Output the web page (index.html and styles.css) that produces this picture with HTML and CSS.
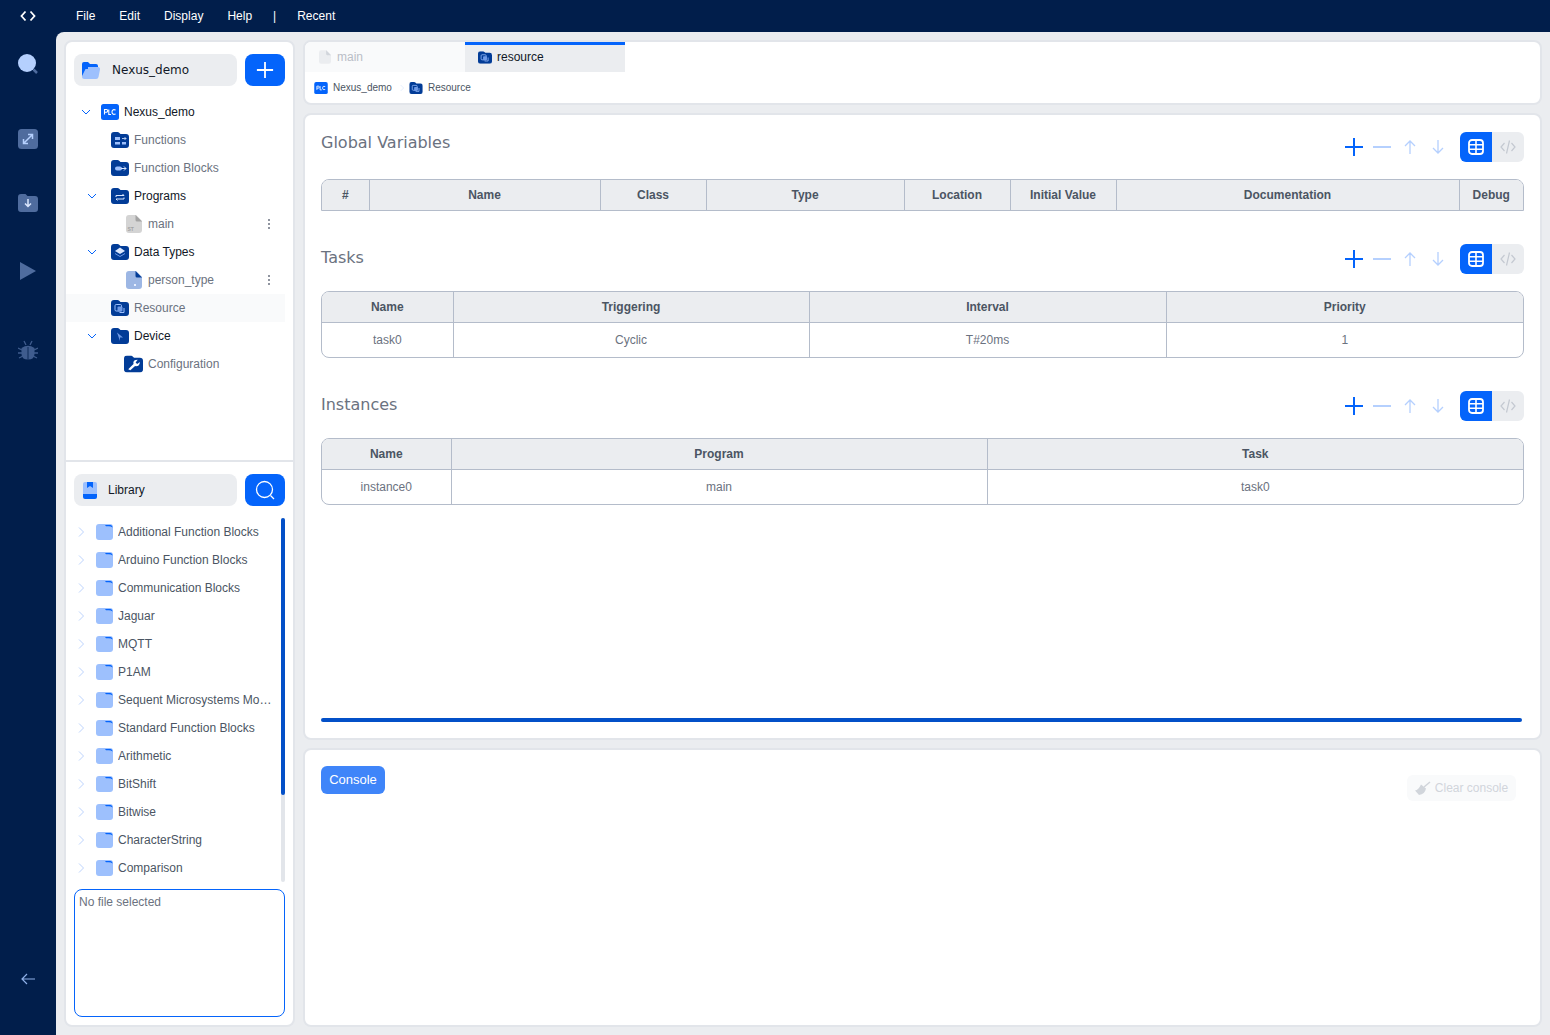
FILE: index.html
```html
<!DOCTYPE html>
<html lang="en">
<head>
    <meta charset="UTF-8">
    <meta name="viewport" content="width=device-width, initial-scale=1.0">
    <title>Nexus_demo - resource</title>
    <link rel="stylesheet" href="styles.css">
</head>
<body>
    <!-- Shared icons -->
    <svg class="sprite" width="0" height="0">
        <symbol id="i-folder" viewBox="0 0 18 16">
            <path d="M3 0H6.500Q7.500 0 8.200 .8L9.500 2H15A3 3 0 0 1 18 5V13A3 3 0 0 1 15 16H3A3 3 0 0 1 0 13V3A3 3 0 0 1 3 0z" fill="#023c97"/>
        </symbol>
        <symbol id="i-plc" viewBox="0 0 18 16">
            <rect width="18" height="16" rx="2.500" fill="#0464fb"/>
            <path d="M3.500 10.500V5.500H5.500Q6.700 5.500 6.700 6.800T5.500 8.200H3.500M7.800 5.500V10.500H10M14.600 6Q11 4.800 11 8T14.600 10" fill="none" stroke="#fff" stroke-width="1.100"/>
        </symbol>
        <symbol id="i-libfolder" viewBox="0 0 17 16">
            <rect width="17" height="16" y="0" rx="3" fill="#9dc0fd"/>
            <path d="M9 1H14.500Q16.500 1 16.500 3.500Q15 2 12 2.200H10z" fill="#0464fb"/>
        </symbol>
        <symbol id="i-chevron" viewBox="0 0 12 12">
            <path d="M2 4l4 4 4-4" fill="none" stroke="currentColor" stroke-width="1"/>
        </symbol>
        <symbol id="i-chevron-right" viewBox="0 0 12 12">
            <path d="M4 1.500l4.500 4.500L4 10.500" fill="none" stroke="currentColor" stroke-width="1"/>
        </symbol>
        <symbol id="i-plus" viewBox="0 0 20 20">
            <path d="M10 1V19M1 10H19" fill="none" stroke="currentColor" stroke-width="2"/>
        </symbol>
        <symbol id="i-minus" viewBox="0 0 20 20">
            <path d="M1 10H19" fill="none" stroke="currentColor" stroke-width="2"/>
        </symbol>
        <symbol id="i-up" viewBox="0 0 14 16">
            <path d="M7 15V2M2 7l5-5 5 5" fill="none" stroke="currentColor" stroke-width="1.300"/>
        </symbol>
        <symbol id="i-down" viewBox="0 0 14 16">
            <path d="M7 1V14M2 9l5 5 5-5" fill="none" stroke="currentColor" stroke-width="1.300"/>
        </symbol>
        <symbol id="i-grid" viewBox="0 0 16 16">
            <rect x="1" y="1" width="14" height="14" rx="3" fill="none" stroke="currentColor" stroke-width="1.800"/>
            <path d="M1 5.700H15M1 10.300H15M8 1V15" stroke="currentColor" stroke-width="1.600"/>
        </symbol>
        <symbol id="i-code" viewBox="0 0 16 16">
            <path d="M4.500 4L1 8l3.500 4M11.500 4L15 8l-3.500 4M9.500 1.500L6.500 14.500" fill="none" stroke="currentColor" stroke-width="1.200"/>
        </symbol>
        <symbol id="i-file" viewBox="0 0 16 18">
            <path d="M3 0H10L16 6V15A3 3 0 0 1 13 18H3A3 3 0 0 1 0 15V3A3 3 0 0 1 3 0z" fill="currentColor"/>
            <path d="M9.500 0L16 6.500H11A1.500 1.500 0 0 1 9.500 5z" fill="var(--fold)"/>
        </symbol>
        <symbol id="i-resource" viewBox="0 0 18 16">
            <use href="#i-folder"/>
            <rect x="4" y="4.500" width="6.500" height="6.500" rx="1.200" fill="none" stroke="#9dc0fd" stroke-width="1"/>
            <rect x="6.500" y="6.500" width="5" height="5" rx="1" fill="#6f9ae6"/>
            <path d="M13 8V12.500H8.500" fill="none" stroke="#9dc0fd" stroke-width="1"/>
        </symbol>
    </svg>

    <header class="topbar">
        <div class="logo">
            <svg width="16" height="12" viewBox="0 0 16 12"><path d="M5.500 1.500L1.500 6l4 4.500M10.500 1.500l4 4.500-4 4.500" fill="none" stroke="#fff" stroke-width="1.800"/></svg>
        </div>
        <nav class="menu">
            <span>File</span>
            <span>Edit</span>
            <span>Display</span>
            <span>Help</span>
            <span class="menu-sep">|</span>
            <span>Recent</span>
        </nav>
    </header>

    <div class="app">
        <!-- Activity bar -->
        <aside class="activity">
            <button class="activity-btn search">
                <svg width="22" height="22" viewBox="0 0 22 22"><circle cx="10" cy="10" r="9" fill="#b5d0fe"/><path d="M16.500 16.500L20 20" stroke="#4f6c9e" stroke-width="2.500"/></svg>
            </button>
            <button class="activity-btn zoom">
                <svg width="20" height="20" viewBox="0 0 20 20"><rect width="20" height="20" rx="3.500" fill="#4f6c9e"/><path d="M6 14L14 6M10 5.500H14.500V10M5.500 10V14.500H10" fill="none" stroke="#b5d0fe" stroke-width="1.500"/></svg>
            </button>
            <button class="activity-btn download">
                <svg width="20" height="18" viewBox="0 0 20 18"><path d="M3 0H7.500l2 2H17a3 3 0 0 1 3 3v10a3 3 0 0 1-3 3H3a3 3 0 0 1-3-3V3a3 3 0 0 1 3-3z" fill="#4f6c9e"/><path d="M10 5V12M7 9.500l3 3 3-3" fill="none" stroke="#dbe7fe" stroke-width="1.500"/></svg>
            </button>
            <button class="activity-btn run">
                <svg width="16" height="18" viewBox="0 0 16 18"><path d="M0 0L16 9 0 18z" fill="#4f6c9e"/></svg>
            </button>
            <button class="activity-btn debug">
                <svg width="20" height="20" viewBox="0 0 20 20"><path d="M3.500 8Q10 3.500 16.500 8V14Q16.500 19.500 10 19.500T3.500 14z" fill="#3f5c8e"/><path d="M0 8L4 10M20 8L16 10M0 13H4M20 13H16M1 18L5 16M19 18L15 16M6 1L8 5M14 1L12 5" stroke="#3f5c8e" stroke-width="1.300"/><path d="M10 7V19.500" stroke="#011e4b" stroke-width=".8"/></svg>
            </button>
            <button class="activity-btn collapse">
                <svg width="14" height="12" viewBox="0 0 14 12"><path d="M14 6H1M6 1L1 6l5 5" fill="none" stroke="#8fb0e8" stroke-width="1.200"/></svg>
            </button>
        </aside>

        <main class="workspace">
            <!-- Project and library -->
            <section class="panel side">
                <div class="project">
                    <div class="side-head">
                        <div class="side-title project-title">
                            <svg width="18" height="17" viewBox="0 0 18 17"><path d="M2 0H6l2 2h6a2 2 0 0 1 2 2v2H0V2a2 2 0 0 1 2-2z" fill="#0464fb"/><path d="M0 5H2H16a2 2 0 0 1 2 2.500L16.500 15a2.500 2.500 0 0 1-2.500 2H2.500A2.500 2.500 0 0 1 0 14.500z" fill="#9dc0fd"/><path d="M0 4H6V7H3.500L0 14z" fill="#0464fb"/></svg>
                            <span>Nexus_demo</span>
                        </div>
                        <button class="side-btn"><svg width="18" height="18"><use href="#i-plus"/></svg></button>
                    </div>
                    <ul class="tree">
                        <li class="row root">
                            <svg class="chev" width="12" height="12"><use href="#i-chevron"/></svg>
                            <svg class="ico" width="18" height="16"><use href="#i-plc"/></svg>
                            <span class="strong">Nexus_demo</span>
                        </li>
                        <li class="row group">
                            <svg class="ico" width="18" height="16" viewBox="0 0 18 16"><use href="#i-folder"/><path d="M4 5H9V8H4zM4 10H9V12.500H4zM11 10H15V12.500H11z" fill="#9dc0fd"/><path d="M11 6.500H15M13.500 5L15 6.500 13.500 8" fill="none" stroke="#dbe7fe" stroke-width=".8"/></svg>
                            <span>Functions</span>
                        </li>
                        <li class="row group">
                            <svg class="ico" width="18" height="16" viewBox="0 0 18 16"><use href="#i-folder"/><rect x="4" y="6.500" width="7" height="4" rx="2" fill="#9dc0fd"/><path d="M10 8.500H15M13 6.500l2 2-2 2" fill="none" stroke="#dbe7fe"/></svg>
                            <span>Function Blocks</span>
                        </li>
                        <li class="row sub">
                            <svg class="chev" width="12" height="12"><use href="#i-chevron"/></svg>
                            <svg class="ico" width="18" height="16" viewBox="0 0 18 16"><use href="#i-folder"/><path d="M5 9V7.500H13M11.500 6L13 7.500M13 9.500V11H5M6.500 12.500L5 11" fill="none" stroke="#dbe7fe"/></svg>
                            <span class="strong">Programs</span>
                        </li>
                        <li class="row leaf">
                            <svg class="ico-file st" width="16" height="18" viewBox="0 0 16 18"><use href="#i-file"/><text x="1.500" y="15.500" class="file-tag">ST</text></svg>
                            <span>main</span>
                            <span class="kebab"></span>
                        </li>
                        <li class="row sub">
                            <svg class="chev" width="12" height="12"><use href="#i-chevron"/></svg>
                            <svg class="ico" width="18" height="16" viewBox="0 0 18 16"><use href="#i-folder"/><path d="M9 3.500L14 7 9 10 4 7z" fill="#dbe7fe"/><path d="M4 9.500L9 12.500l5-3" fill="none" stroke="#6f9ae6"/></svg>
                            <span class="strong">Data Types</span>
                        </li>
                        <li class="row leaf">
                            <svg class="ico-file dt" width="16" height="18" viewBox="0 0 16 18"><use href="#i-file"/><rect x="8" y="13" width="2" height="2" fill="#e8effe"/></svg>
                            <span>person_type</span>
                            <span class="kebab"></span>
                        </li>
                        <li class="row group selected">
                            <svg class="ico" width="18" height="16"><use href="#i-resource"/></svg>
                            <span>Resource</span>
                        </li>
                        <li class="row sub">
                            <svg class="chev" width="12" height="12"><use href="#i-chevron"/></svg>
                            <svg class="ico" width="18" height="16" viewBox="0 0 18 16"><use href="#i-folder"/><path d="M6 4.500L12 9.500H9V13z" fill="#6f9ae6"/></svg>
                            <span class="strong">Device</span>
                        </li>
                        <li class="row config">
                            <svg class="ico" width="19" height="18" viewBox="0 0 18 16"><use href="#i-folder"/><path d="M4 13L9 8Q8 4 13 4L11 6.500 12.500 8 15 6Q15 10.500 10.500 10L6 14z" fill="#fff"/></svg>
                            <span>Configuration</span>
                        </li>
                    </ul>
                </div>

                <div class="library">
                    <div class="side-head">
                        <div class="side-title library-title">
                            <svg width="14" height="17" viewBox="0 0 14 17"><path d="M2 0H12a2 2 0 0 1 2 2V13H0V2a2 2 0 0 1 2-2z" fill="#9dc0fd"/><path d="M4 0H10V6L7 4 4 6z" fill="#0464fb"/><path d="M0 12H14V15a2 2 0 0 1-2 2H2a2 2 0 0 1-2-2z" fill="#0464fb"/></svg>
                            <span>Library</span>
                        </div>
                        <button class="side-btn"><svg width="20" height="20" viewBox="0 0 20 20"><circle cx="9.500" cy="9.500" r="8" fill="none" stroke="#fff" stroke-width="1.300"/><path d="M15.500 15.500L19 19" stroke="#fff" stroke-width="1.300"/></svg></button>
                    </div>
                    <div class="lib-body">
                        <ul class="lib-list">
                            <li class="lib-row"><svg class="lib-chev" width="12" height="12"><use href="#i-chevron-right"/></svg><svg class="lib-ico" width="17" height="16"><use href="#i-libfolder"/></svg><span>Additional Function Blocks</span></li>
                            <li class="lib-row"><svg class="lib-chev" width="12" height="12"><use href="#i-chevron-right"/></svg><svg class="lib-ico" width="17" height="16"><use href="#i-libfolder"/></svg><span>Arduino Function Blocks</span></li>
                            <li class="lib-row"><svg class="lib-chev" width="12" height="12"><use href="#i-chevron-right"/></svg><svg class="lib-ico" width="17" height="16"><use href="#i-libfolder"/></svg><span>Communication Blocks</span></li>
                            <li class="lib-row"><svg class="lib-chev" width="12" height="12"><use href="#i-chevron-right"/></svg><svg class="lib-ico" width="17" height="16"><use href="#i-libfolder"/></svg><span>Jaguar</span></li>
                            <li class="lib-row"><svg class="lib-chev" width="12" height="12"><use href="#i-chevron-right"/></svg><svg class="lib-ico" width="17" height="16"><use href="#i-libfolder"/></svg><span>MQTT</span></li>
                            <li class="lib-row"><svg class="lib-chev" width="12" height="12"><use href="#i-chevron-right"/></svg><svg class="lib-ico" width="17" height="16"><use href="#i-libfolder"/></svg><span>P1AM</span></li>
                            <li class="lib-row"><svg class="lib-chev" width="12" height="12"><use href="#i-chevron-right"/></svg><svg class="lib-ico" width="17" height="16"><use href="#i-libfolder"/></svg><span>Sequent Microsystems Modules</span></li>
                            <li class="lib-row"><svg class="lib-chev" width="12" height="12"><use href="#i-chevron-right"/></svg><svg class="lib-ico" width="17" height="16"><use href="#i-libfolder"/></svg><span>Standard Function Blocks</span></li>
                            <li class="lib-row"><svg class="lib-chev" width="12" height="12"><use href="#i-chevron-right"/></svg><svg class="lib-ico" width="17" height="16"><use href="#i-libfolder"/></svg><span>Arithmetic</span></li>
                            <li class="lib-row"><svg class="lib-chev" width="12" height="12"><use href="#i-chevron-right"/></svg><svg class="lib-ico" width="17" height="16"><use href="#i-libfolder"/></svg><span>BitShift</span></li>
                            <li class="lib-row"><svg class="lib-chev" width="12" height="12"><use href="#i-chevron-right"/></svg><svg class="lib-ico" width="17" height="16"><use href="#i-libfolder"/></svg><span>Bitwise</span></li>
                            <li class="lib-row"><svg class="lib-chev" width="12" height="12"><use href="#i-chevron-right"/></svg><svg class="lib-ico" width="17" height="16"><use href="#i-libfolder"/></svg><span>CharacterString</span></li>
                            <li class="lib-row"><svg class="lib-chev" width="12" height="12"><use href="#i-chevron-right"/></svg><svg class="lib-ico" width="17" height="16"><use href="#i-libfolder"/></svg><span>Comparison</span></li>
                        </ul>
                        <div class="lib-scroll"><div class="lib-thumb"></div></div>
                    </div>
                    <div class="file-box">No file selected</div>
                </div>
            </section>

            <div class="content">
                <!-- Tabs and breadcrumb -->
                <section class="panel tabs-card">
                    <div class="tabs">
                        <div class="tab">
                            <svg class="tab-file" width="12" height="14"><use href="#i-file"/></svg>
                            <span>main</span>
                        </div>
                        <div class="tab active">
                            <svg width="14" height="13"><use href="#i-resource"/></svg>
                            <span>resource</span>
                        </div>
                    </div>
                    <div class="crumbs">
                        <svg width="14" height="12"><use href="#i-plc"/></svg>
                        <span>Nexus_demo</span>
                        <svg class="crumb-sep" width="6" height="8" viewBox="2 0 8 12"><use href="#i-chevron-right" width="12" height="12"/></svg>
                        <svg width="14" height="12"><use href="#i-resource"/></svg>
                        <span>Resource</span>
                    </div>
                </section>

                <!-- Resource editor -->
                <section class="panel editor">
                    <div class="sections">
                        <div class="block first">
                            <div class="block-head">
                                <h2>Global Variables</h2>
                                <div class="actions">
                                    <button class="act"><svg class="act-plus" width="20" height="20"><use href="#i-plus"/></svg></button>
                                    <button class="act"><svg class="act-minus" width="20" height="20"><use href="#i-minus"/></svg></button>
                                    <button class="act"><svg class="act-arrow" width="14" height="16"><use href="#i-up"/></svg></button>
                                    <button class="act"><svg class="act-arrow" width="14" height="16"><use href="#i-down"/></svg></button>
                                    <div class="toggle">
                                        <button class="toggle-btn on"><svg width="16" height="16"><use href="#i-grid"/></svg></button>
                                        <button class="toggle-btn"><svg width="16" height="16"><use href="#i-code"/></svg></button>
                                    </div>
                                </div>
                            </div>
                            <div class="table-wrap head-only">
                                <table class="grid vars">
                                    <thead>
                                        <tr><th>#</th><th>Name</th><th>Class</th><th>Type</th><th>Location</th><th>Initial Value</th><th>Documentation</th><th>Debug</th></tr>
                                    </thead>
                                </table>
                            </div>
                        </div>

                        <div class="block">
                            <div class="block-head">
                                <h2>Tasks</h2>
                                <div class="actions">
                                    <button class="act"><svg class="act-plus" width="20" height="20"><use href="#i-plus"/></svg></button>
                                    <button class="act"><svg class="act-minus" width="20" height="20"><use href="#i-minus"/></svg></button>
                                    <button class="act"><svg class="act-arrow" width="14" height="16"><use href="#i-up"/></svg></button>
                                    <button class="act"><svg class="act-arrow" width="14" height="16"><use href="#i-down"/></svg></button>
                                    <div class="toggle">
                                        <button class="toggle-btn on"><svg width="16" height="16"><use href="#i-grid"/></svg></button>
                                        <button class="toggle-btn"><svg width="16" height="16"><use href="#i-code"/></svg></button>
                                    </div>
                                </div>
                            </div>
                            <div class="table-wrap">
                                <table class="grid tasks">
                                    <thead>
                                        <tr><th>Name</th><th>Triggering</th><th>Interval</th><th>Priority</th></tr>
                                    </thead>
                                    <tbody>
                                        <tr><td>task0</td><td>Cyclic</td><td>T#20ms</td><td>1</td></tr>
                                    </tbody>
                                </table>
                            </div>
                        </div>

                        <div class="block">
                            <div class="block-head">
                                <h2>Instances</h2>
                                <div class="actions">
                                    <button class="act"><svg class="act-plus" width="20" height="20"><use href="#i-plus"/></svg></button>
                                    <button class="act"><svg class="act-minus" width="20" height="20"><use href="#i-minus"/></svg></button>
                                    <button class="act"><svg class="act-arrow" width="14" height="16"><use href="#i-up"/></svg></button>
                                    <button class="act"><svg class="act-arrow" width="14" height="16"><use href="#i-down"/></svg></button>
                                    <div class="toggle">
                                        <button class="toggle-btn on"><svg width="16" height="16"><use href="#i-grid"/></svg></button>
                                        <button class="toggle-btn"><svg width="16" height="16"><use href="#i-code"/></svg></button>
                                    </div>
                                </div>
                            </div>
                            <div class="table-wrap">
                                <table class="grid instances">
                                    <thead>
                                        <tr><th>Name</th><th>Program</th><th>Task</th></tr>
                                    </thead>
                                    <tbody>
                                        <tr><td>instance0</td><td>main</td><td>task0</td></tr>
                                    </tbody>
                                </table>
                            </div>
                        </div>
                    </div>
                    <div class="h-scroll"></div>
                </section>

                <!-- Console -->
                <section class="panel console">
                    <button class="console-tab">Console</button>
                    <button class="clear-btn">
                        <svg width="16" height="14" viewBox="0 0 16 14"><path d="M9 6L15 1" stroke="#d1d5db" stroke-width="1.500"/><path d="M6 3.500L11 7.500Q10 13 4 14L0 9.500Q3.500 9 6 3.500z" fill="#d1d5db"/></svg>
                        <span>Clear console</span>
                    </button>
                </section>
            </div>
        </main>
    </div>
</body>
</html>
```

FILE: styles.css
```css
/* General Styles */
* {
    box-sizing: border-box;
}

body {
    margin: 0;
    height: 100vh;
    display: flex;
    flex-direction: column;
    overflow: hidden;
    background: #011e4b;
    font-family: "Liberation Sans", Arial, sans-serif;
    font-size: 12px;
    color: #6b7280;
}

ul {
    list-style: none;
    margin: 0;
    padding: 0;
}

button {
    border: none;
    padding: 0;
    background: none;
    font: inherit;
    display: flex;
    align-items: center;
    justify-content: center;
}

svg {
    display: block;
    flex: none;
}

.sprite {
    position: absolute;
}

/* Top bar */
.topbar {
    height: 32px;
    flex: none;
    display: flex;
    align-items: center;
    color: #fff;
}

.logo {
    width: 56px;
    display: flex;
    justify-content: center;
}

.menu {
    display: flex;
    gap: 24px;
    margin-left: 20px;
}

.menu-sep {
    margin: 0 -3px 0 -3px;
}

.app {
    flex: 1;
    min-height: 0;
    display: flex;
}

/* Activity bar */
.activity {
    width: 56px;
    flex: none;
    display: flex;
    flex-direction: column;
    align-items: center;
}

.activity-btn {
    width: 56px;
    height: 24px;
}

.activity-btn.search { margin-top: 20px; }
.activity-btn.zoom { margin-top: 51px; }
.activity-btn.download { margin-top: 40px; }
.activity-btn.run { margin-top: 44px; }
.activity-btn.debug { margin-top: 55px; }
.activity-btn.collapse { margin-top: auto; margin-bottom: 44px; }

/* Workspace */
.workspace {
    flex: 1;
    min-width: 0;
    display: flex;
    gap: 8px;
    padding: 8px;
    background: #ebedf0;
    border-top-left-radius: 8px;
}

.panel {
    background: #fff;
    border: 2px solid #e2e5ea;
    border-radius: 8px;
}

/* Left panel */
.side {
    width: 231px;
    flex: none;
    display: flex;
    flex-direction: column;
}

.project {
    flex: 1;
    min-height: 0;
    padding-top: 12px;
}

.side-head {
    display: flex;
    gap: 8px;
    padding: 0 8px;
}

.side-title {
    flex: 1;
    height: 32px;
    display: flex;
    align-items: center;
    background: #ebedf0;
    border-radius: 8px;
    color: #111827;
}

.project-title {
    padding-left: 8px;
    gap: 12px;
    font-family: "DejaVu Sans", sans-serif;
    font-size: 12px;
}

.library-title {
    padding-left: 9px;
    gap: 11px;
}

.side-btn {
    width: 40px;
    height: 32px;
    background: #0464fb;
    border-radius: 8px;
    color: #fff;
}

.tree {
    margin-top: 12px;
    padding-right: 8px;
}

.row {
    height: 28px;
    display: flex;
    align-items: center;
    gap: 5px;
    color: #6b7280;
}

.row.root { padding-left: 14px; }
.row.group { padding-left: 45px; }
.row.sub { padding-left: 20px; }
.row.leaf { padding-left: 60px; gap: 6px; }
.row.config { padding-left: 58px; }

.row .strong {
    color: #111827;
}

.chev {
    color: #0464fb;
    margin-right: 4px;
}

.row.sub .chev {
    margin-right: 8px;
}

.row.selected {
    background: #f9fafb;
}

.ico-file.st {
    color: #d4d4d4;
    --fold: #a3a3a3;
}

.ico-file.dt {
    color: #9db7e4;
    --fold: #023c97;
}

.file-tag {
    font-family: "Liberation Sans", Arial, sans-serif;
    font-size: 5px;
    font-weight: 700;
    fill: #a3a3a3;
}

.kebab {
    margin-left: auto;
    margin-right: 15px;
    width: 2px;
    height: 2px;
    border-radius: 50%;
    background: #6b7280;
    box-shadow: 0 -4px 0 #6b7280, 0 4px 0 #6b7280;
}

/* Library */
.library {
    flex: none;
    height: 565px;
    padding-top: 12px;
    border-top: 2px solid #e2e5ea;
}

.lib-body {
    display: flex;
    height: 364px;
    margin: 12px 8px 7px;
}

.lib-list {
    flex: 1;
    min-width: 0;
    overflow: hidden;
}

.lib-row {
    height: 28px;
    display: flex;
    align-items: center;
    padding-right: 8px;
    color: #4b5563;
}

.lib-row span {
    flex: 1;
    min-width: 0;
    white-space: nowrap;
    overflow: hidden;
    text-overflow: ellipsis;
}

.lib-chev {
    color: #bcd3fd;
    margin-left: 1px;
    margin-right: 9px;
}

.lib-ico {
    margin-right: 5px;
}

.lib-scroll {
    width: 4px;
    flex: none;
    background: #e2e5ea;
    border-radius: 2px;
}

.lib-thumb {
    height: 277px;
    background: #0350c8;
    border-radius: 2px;
}

.file-box {
    height: 128px;
    margin: 0 8px;
    padding: 5px 4px;
    border: 1px solid #0464fb;
    border-radius: 8px;
    color: #6b7280;
}

/* Right column */
.content {
    flex: 1;
    min-width: 0;
    display: flex;
    flex-direction: column;
    gap: 8px;
}

.tabs-card {
    height: 65px;
    flex: none;
    overflow: hidden;
}

.tabs {
    display: flex;
    height: 30px;
}

.tab {
    width: 160px;
    display: flex;
    align-items: center;
    gap: 6px;
    padding-left: 14px;
    background: #f9fafb;
    color: #b9bec7;
}

.tab-file {
    color: #ebedf0;
    --fold: #d1d5db;
}

.tab.active {
    background: #ebedf0;
    border-top: 3px solid #0464fb;
    color: #111827;
    padding-left: 13px;
    padding-bottom: 3px;
    gap: 5px;
}

.crumbs {
    height: 31px;
    display: flex;
    align-items: center;
    gap: 5px;
    padding-left: 9px;
    font-size: 10px;
    color: #4b5563;
}

.crumb-sep {
    color: #dbe7fe;
    margin: 0 -1px 0 2px;
}

/* Editor */
.editor {
    height: 627px;
    flex: none;
    display: flex;
    flex-direction: column;
    padding: 17px 16px 16px;
}

.sections {
    flex: 1;
    min-height: 0;
    display: flex;
    flex-direction: column;
    gap: 33px;
}

.block-head {
    display: flex;
    justify-content: space-between;
    margin-bottom: 17px;
}

h2 {
    margin: 4px 0 0;
    font-family: "DejaVu Sans", sans-serif;
    font-size: 16px;
    line-height: 20px;
    font-weight: 400;
    color: #6b7280;
}

.first h2 {
    margin-top: 0;
    padding-top: 1px;
}

.actions {
    display: flex;
    align-items: center;
}

.act {
    width: 28px;
    height: 30px;
}

.act-plus { color: #0464fb; }
.act-minus { color: #b5d0fe; }
.act-arrow { color: #b5d0fe; }

.toggle {
    display: flex;
    margin-left: 8px;
    border-radius: 6px;
    overflow: hidden;
}

.toggle-btn {
    width: 32px;
    height: 30px;
    background: #ebedf0;
    color: #c4c9d1;
}

.toggle-btn.on {
    background: #0464fb;
    color: #fff;
}

/* Tables */
.table-wrap {
    border: 1px solid #b4bcca;
    border-radius: 8px;
    overflow: hidden;
}

.table-wrap.head-only {
    border-radius: 8px 8px 0 0;
}

.grid {
    width: 100%;
    table-layout: fixed;
    border-collapse: collapse;
}

.grid th {
    height: 30px;
    background: #ebedf0;
    color: #4b5563;
    font-weight: 700;
    border-right: 1px solid #b4bcca;
}

.grid td {
    height: 35px;
    text-align: center;
    color: #6b7280;
    border-top: 1px solid #b4bcca;
    border-right: 1px solid #b4bcca;
}

.grid th:last-child,
.grid td:last-child {
    border-right: none;
}

.vars th:nth-child(1) { width: 47px; }
.vars th:nth-child(2) { width: 231px; }
.vars th:nth-child(3) { width: 106px; }
.vars th:nth-child(4) { width: 198px; }
.vars th:nth-child(5) { width: 106px; }
.vars th:nth-child(6) { width: 106px; }
.vars th:nth-child(7) { width: 343px; }

.tasks th:nth-child(1) { width: 131px; }
.tasks th:nth-child(2) { width: 356px; }
.tasks th:nth-child(3) { width: 357px; }

.instances th:nth-child(1) { width: 129px; }
.instances th:nth-child(2) { width: 536px; }

.h-scroll {
    height: 4px;
    flex: none;
    margin-right: 2px;
    background: #0350c8;
    border-radius: 2px;
}

/* Console */
.console {
    flex: 1;
    min-height: 0;
    display: flex;
    justify-content: space-between;
    align-items: flex-start;
    padding: 16px 24px 0 16px;
}

.console-tab {
    width: 64px;
    height: 28px;
    padding-bottom: 2px;
    background: #3f85f9;
    color: #fff;
    border-radius: 6px;
    font-size: 13px;
}

.clear-btn {
    width: 109px;
    height: 26px;
    margin-top: 9px;
    gap: 4px;
    background: #f9fafb;
    border-radius: 6px;
    color: #d1d5db;
}
```
